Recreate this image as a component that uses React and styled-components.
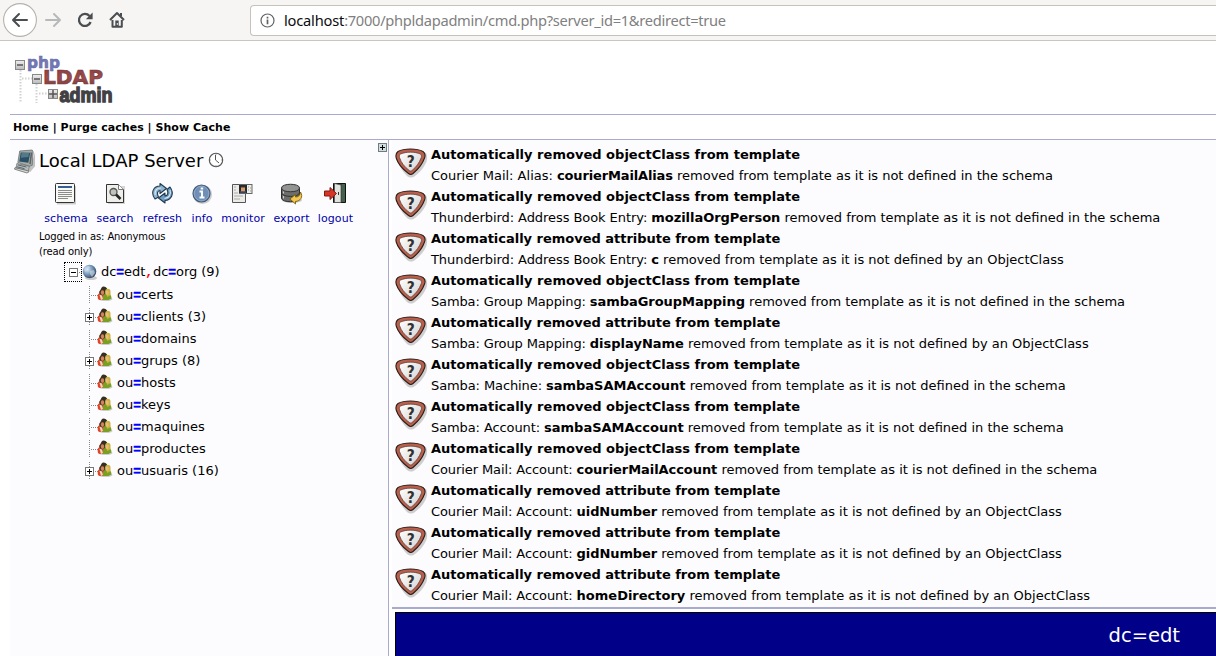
import React from 'react';
import styled, { createGlobalStyle } from 'styled-components';

const Global = createGlobalStyle`
  *{box-sizing:border-box}
  body{margin:0;background:#fff;overflow:hidden;color:#000;font-family:"DejaVu Sans",sans-serif;font-size:13px}
  svg{display:block;flex:none}
`;
const Page = styled.div`width:1216px;height:656px;overflow:hidden;display:flex;flex-direction:column;`;
const Toolbar = styled.div`height:41px;flex:none;background:#f6f5f4;border-bottom:1px solid #c9c6bf;display:flex;align-items:center;overflow:hidden;`;
const NavIcons = styled.div`width:250px;height:40px;flex:none;`;
const UrlField = styled.div`
  height:31px;flex:1;background:#fff;border:1px solid #c6c2b9;border-right:0;border-radius:4px 0 0 4px;
  display:flex;align-items:center;padding-left:9px;gap:9px;
  font:14.67px "Noto Sans",sans-serif;letter-spacing:-.285px;color:#808080;white-space:pre;
`;
const Host = styled.span`color:#0c0c0d;letter-spacing:-.2px;`;
const Header = styled.header`height:73px;flex:none;padding:13px 0 0 14px;`;
const Menu = styled.nav`
  margin-left:10px;height:26px;flex:none;border-top:1px solid #aaaacc;border-bottom:1px solid #aaaacc;
  padding:1px 0 0 3px;font-size:11px;font-weight:bold;line-height:24px;letter-spacing:.03px;white-space:pre;
`;
const Columns = styled.div`display:flex;flex:1;min-height:0;padding-left:10px;`;
const Sidebar = styled.aside`width:379px;flex:none;background:#fcfcfe;border-right:1px solid #aaaacc;`;
const ServerRow = styled.div`display:flex;height:40px;padding-left:3px;`;
const ServerIcon = styled.div`width:26px;padding:9px 0 0 1px;`;
const ServerName = styled.h1`margin:0;font-size:18px;font-weight:normal;line-height:41px;letter-spacing:.03px;white-space:nowrap;`;
const Clock = styled.div`padding:12px 0 0 5px;flex:1;`;
const Expander = styled.div`padding:3px 1px 0 0;`;
const Tools = styled.div`display:flex;padding-left:30px;height:49px;`;
const Tool = styled.div`
  width:${p => p.$w}px;flex:none;display:flex;flex-direction:column;align-items:center;padding-top:2px;
  font-size:11px;line-height:15px;color:#0000aa;gap:5px;letter-spacing:.1px;white-space:nowrap;
`;
const Login = styled.div`padding-left:29px;font-size:10px;line-height:15px;height:31px;letter-spacing:-.12px;`;
const Tree = styled.div`white-space:nowrap;`;
const Root = styled.div`display:flex;align-items:center;height:24px;padding:0 0 1px 54px;letter-spacing:-.06px;`;
const Focus = styled.div`width:18px;height:20px;border:1px dotted #000;padding:5px 0 0 4px;`;
const Globe = styled.div`width:19px;`;
const Branch = styled.div`display:flex;align-items:center;height:22px;padding-left:74px;`;
const BranchArt = styled.div`width:33px;`;
const Op = styled.span`
  font-family:"Liberation Mono",monospace;font-weight:bold;color:${p => p.$c};
  -webkit-text-stroke:${p => p.$heavy ? '.45px' : '0'} ${p => p.$c};
`;
const Content = styled.main`flex:1;min-width:0;padding-left:3px;display:flex;flex-direction:column;`;
const Messages = styled.section`background:#fcfcfe;border-bottom:2px solid #aaaacc;height:469px;flex:none;padding:4px 0 0 3px;`;
const Message = styled.div`display:flex;height:42px;`;
const Shield = styled.div`width:36px;padding-top:4px;`;
const Copy = styled.div`line-height:21px;white-space:nowrap;`;
const Title = styled.div`font-weight:bold;letter-spacing:${p => p.$track}px;`;
const Where = styled.span`letter-spacing:${p => p.$track}px;`;
const Name = styled.b`letter-spacing:${p => p.$track}px;`;
const Entry = styled.h2`
  margin:3px 0 0 3px;flex:1;background:#000088;border-top:1px solid #000;border-left:1px solid #000;
  color:#fff;font-size:19.5px;font-weight:normal;line-height:46px;text-align:right;padding-right:36px;
`;

const Nav = () => (
  <svg width="250" height="40" fill="none" stroke="#4a4e50" strokeWidth="2" strokeLinecap="round" strokeLinejoin="round">
    <circle cx="20" cy="20" r="16.4" fill="#fff" stroke="#b5b2ac" strokeWidth="1.1" />
    <path d="M27 20H13M19 14l-6 6 6 6" />
    <path d="M46 20h14M54 14l6 6-6 6" stroke="#b7b8b8" />
    <path d="M89.5 16A6 6 0 1 0 90.6 22" strokeWidth="2.3" strokeLinecap="butt" />
    <path d="M92.6 12.6v6.6h-6.8z" fill="#4a4e50" stroke="none" />
    <path d="M110 20l7-7 7 7M112.5 20v6.7h9.3V20M121 13v3" strokeLinecap="butt" />
    <path d="M115.3 20.5h3.4v6.5h-3.4z" fill="#4a4e50" stroke="none" />
    <path d="M117.3 23.5v.9" stroke="#fff" strokeWidth="1" />
  </svg>
);
const UrlInfo = () => (
  <svg width="15" height="15" fill="none" stroke="#606365"><circle cx="7.5" cy="7.5" r="6.5" strokeWidth="1.2" /><path d="M7.5 6.6v4.6M7.5 3.8v1.6" strokeWidth="1.7" /></svg>
);
const Logo = () => (
  <svg width="110" height="56">
    <defs>
      <linearGradient id="box" x2="0" y2="1"><stop stopColor="#eee" /><stop offset="1" stopColor="#bbb" /></linearGradient>
      <linearGradient id="red" x2="0" y2="1"><stop stopColor="#843c40" /><stop offset=".5" stopColor="#a14b4c" /><stop offset="1" stopColor="#74383b" /></linearGradient>
    </defs>
    <g stroke="#d2d2d2" strokeWidth="2" strokeDasharray="1.5 1.5"><path d="M6.5 16v33M22.500 30v19M8 24.500h10M25 39.500h10" /></g>
    <g stroke="#888" fill="url(#box)"><rect x="1.500" y="6.500" width="9" height="9" /><rect x="18.500" y="20.500" width="9" height="9" /><rect x="34.500" y="35.500" width="9" height="9" /></g>
    <path d="M3 11h6M20 25h6M35 40h8M39 36v8" stroke="#555" strokeWidth="1.5" />
    <g fontWeight="bold">
      <text x="13" y="14.300" fontFamily="DejaVu Sans" fontSize="16.500" textLength="33" lengthAdjust="spacingAndGlyphs" fill="#7777b5" stroke="#666ca6" strokeWidth=".6">php</text>
      <text x="29" y="30" fontFamily="DejaVu Sans" fontSize="19.500" textLength="60" lengthAdjust="spacingAndGlyphs" fill="url(#red)" stroke="#753a3c" strokeWidth=".7">LDAP</text>
      <text x="45.500" y="47.500" fontFamily="Liberation Sans Narrow, Liberation Sans" fontSize="21" textLength="53" lengthAdjust="spacingAndGlyphs" fill="#414144" stroke="#414144" strokeWidth="1.400">admin</text>
    </g>
  </svg>
);
const Computer = () => (
  <svg width="22" height="25" viewBox="0 0 23 26">
    <path d="M2 19l4-3 12 2 4-15v15l-5 6z" fill="#999" opacity=".6" />
    <path d="M6 2L19 1l1 2-1 14-3 1L4 14z" fill="#a7aba6" stroke="#555e60" strokeWidth=".7" />
    <path d="M7 3.500l10 .3-2 10.600L5.500 13z" fill="#284f66" />
    <path d="M8 4l8 .2-1 4-8 1z" fill="#54798b" />
    <path d="M17.500 3l1.500 1-1.500 12-1.500-.5z" fill="#596466" />
    <path d="M3 15l13 3-1 5-13-3z" fill="#b9beba" stroke="#646b6b" strokeWidth=".7" />
    <path d="M1 19.500l13 3 1.500 1.500-2 1L.5 21z" fill="#d6d9d4" stroke="#555" strokeWidth=".7" />
    <path d="M4 16.500l9 2.300M3 18.500l8 2" stroke="#50616a" />
  </svg>
);
const ClockIcon = () => (
  <svg width="16" height="17" fill="none"><circle cx="8" cy="8" r="6.700" fill="#fff" stroke="#555" strokeWidth="1.100" /><path d="M7.500 3v5l3.500 3" stroke="#555" /><path d="M8 2v1M8 13v1M2 8h1M13 8h1" stroke="#999" /></svg>
);
const Plus = () => (
  <svg width="9" height="9"><rect x=".5" y=".5" width="8" height="8" fill="#cfdfe1" stroke="#707c82" /><path d="M2 4.500h5M4.500 2v5" stroke="#000" /></svg>
);
const ToolIcon = ({ kind }) => (
  <svg width="24" height="24">
    {kind === 'schema' && <><path d="M3 4h19v18.500H3z" fill="#bbb" opacity=".7" /><rect x="1.500" y="1.500" width="19" height="19" rx="1" fill="#f8f8f5" stroke="#333" /><path d="M4 5h14" stroke="#355f93" strokeWidth="2" /><path d="M4 8.500h14M4 10.500h14M4 12.500h14M4 14.500h14M4 16.500h10" stroke="#8c8c89" /></>}
    {kind === 'search' && <><path d="M5 4h17v18H5z" fill="#bbb" opacity=".6" /><path d="M3.500 2.500h12l5 5v13h-17z" fill="#eeeeea" stroke="#333" /><path d="M15.500 2.500v5h5" fill="#fff" stroke="#777" /><circle cx="10.500" cy="10" r="3.500" fill="#bec5ba" stroke="#555" strokeWidth="1.300" /><path d="M13 12.500l4.500 4.500" stroke="#252525" strokeWidth="2.700" /></>}
    {kind === 'refresh' && (
      <g stroke="#1f3a50" strokeWidth="1.100" strokeLinejoin="round">
        <path d="M4 17C-1 10 3 4 9 4V1.500l6.500 5-6.500 5V8.500C6 8.500 6 12 7.500 15z" fill="#8fb4d0" />
        <path d="M19 5c5 7 1 13-5 13.500V21L7.500 16l6.500-5v3c3 0 3.500-3.500 2-6.500z" fill="#6e9cc2" />
        <path d="M4.200 13C3.500 8 6 6 10 6M19 8c1.500 5-1 8-5.500 8.500" fill="none" stroke="#dbe8f1" />
      </g>
    )}
    {kind === 'info' && <><circle cx="12.500" cy="12.500" r="9.500" fill="#aaa" opacity=".6" /><circle cx="11.500" cy="11.500" r="8.500" fill="#6f8fb6" stroke="#44597a" strokeWidth="1.200" /><circle cx="11.500" cy="11.500" r="7.300" fill="none" stroke="#a4b8d2" strokeWidth=".6" /><path d="M9.500 9.500H12v6M9.500 15.500h5M10.700 6.500h2.500" fill="none" stroke="#fff" strokeWidth="1.900" /></>}
    {kind === 'monitor' && (
      <>
        <path d="M1.500 2.500h13v18h-13z" fill="#ebebe8" stroke="#555" />
        <path d="M3 5h2M3 8h2M3 11h4M3 14h9M3 17h6" stroke="#aaa" />
        <rect x="8.500" y="2.500" width="12.500" height="9" fill="#eeeee8" stroke="#666" />
        <path d="M8 3h8v8H8z" fill="#252a30" />
        <path d="M10 9.500V5h4v4.500z" fill="#dc9865" /><path d="M9 10h6" stroke="#3d6690" /><path d="M10 5h4" stroke="#4a3025" />
        <path d="M17 5h1M19 6h1M17 8h1M19 9h1" stroke="#999" />
      </>
    )}
    {kind === 'export' && <><ellipse cx="12" cy="18" rx="10" ry="3" fill="#aaa" opacity=".6" /><path d="M1.500 6v10c0 5 18 5 18 0V6z" fill="#6c6e6c" stroke="#2c2d2c" /><path d="M1.500 11c1 4.500 17 4.500 18 0" fill="none" stroke="#303030" /><path d="M1.500 6c0 5 18 5 18 0S1.500 1 1.500 6z" fill="#929492" stroke="#333" /><path d="M3.500 9.500v2M3.500 14v2.500" stroke="#ccc" /><path d="M20.500 10c3 5 0 9-5 9.500V22l-5.500-5 5.500-4.500V15c3 0 4.500-1.500 5-5z" fill="#f3c84c" stroke="#7b5c11" strokeWidth=".9" /></>}
    {kind === 'logout' && <><path d="M9.500 1.500h12v19h-12z" fill="#252b27" stroke="#111" /><path d="M17.500 2h3.500v18h-3.500z" fill="#45604b" /><path d="M10.500 1.500l6.500 1.500v17.500h-6.500z" fill="#e0e3dd" stroke="#555" strokeWidth=".8" /><path d="M14.500 10v3" stroke="#333" /><path d="M.5 9H6V5.500l6.500 6L6 17.500V14H.5z" fill="#d83426" stroke="#7f1a14" /></>}
  </svg>
);
const Minus = () => <svg width="14" height="9"><rect x=".5" y=".5" width="8" height="8" fill="#fff" stroke="#777" /><path d="M2 4.500h5" stroke="#000" /><path d="M10 4.500h4" stroke="#888" strokeDasharray="1 1" /></svg>;
const GlobeIcon = () => (
  <svg width="16" height="16"><defs><radialGradient id="globe" cx=".35" cy=".35" r=".7"><stop stopColor="#dbe8f3" /><stop offset=".45" stopColor="#83a3c4" /><stop offset="1" stopColor="#304560" /></radialGradient></defs>
    <ellipse cx="9" cy="14" rx="6" ry="2" fill="#999" opacity=".5" /><circle cx="7.500" cy="7.500" r="6.800" fill="url(#globe)" /><path d="M3 3l4-1 1 2-3 1-1 3-2-2zM8 7l4-1 1 3-3 4-2-3z" fill="#d2deea" opacity=".6" /></svg>
);
const PeopleBranch = ({ plus }) => (
  <svg width="31" height="22">
    <path d="M5.500 2v18M7 11.500h7" stroke="#888" strokeDasharray="1 1" />
    {plus && <><rect x="1.500" y="7.500" width="8" height="8" fill="#fff" stroke="#777" /><path d="M3 11.500h5M5.500 9v5" stroke="#000" /></>}
    <g transform="translate(-.5 0)">
      <ellipse cx="22" cy="15" rx="7" ry="2" fill="#888" opacity=".4" />
      <path d="M14.500 15c-1.500-6 2-6.500 5.500-6l2 5-2 2c-3 0-5 0-5.500-1z" fill="#e04326" />
      <path d="M19 16l1-6c4-3 8 0 8 4.500L25 16z" fill="#79a023" />
      <path d="M16 11l2-1 1.500 5-2 1z" fill="#f1d3c0" />
      <path d="M17.500 7c-1-5 4-6 6-2.500l.5 4-4 1z" fill="#342f20" />
      <path d="M15.500 8l2-3 3 1 1 4-3 1.500-2-1z" fill="#49331d" />
      <ellipse cx="19" cy="8.600" rx="1.700" ry="2.300" fill="#ce855f" />
      <path d="M21.500 8c0-4 5-4 5.500-1v4l-3 2z" fill="#cdb340" /><ellipse cx="23.700" cy="8.800" rx="1.600" ry="2.300" fill="#e8bb7a" />
    </g>
  </svg>
);
const ShieldIcon = () => (
  <svg width="34" height="31">
    <defs><linearGradient id="face" x2="1" y2="1"><stop stopColor="#fff" /><stop offset="1" stopColor="#d2d2d2" /></linearGradient></defs>
    <path d="M5 5C12 2 25 2 31 5c4 7-3 17-11 23-3 2-5 2-8 0C5 21 1 13 5 5z" fill="#777" opacity=".35" />
    <path d="M3 3.500C9 .2 22 .2 28 3.500c2 1.500 2.500 4 1.500 6.500-2 6-6 11-11.500 15.500-1.500 1.300-3 1.300-4.500 0C7.500 21 3 16 1.200 10 .5 7 1 5 3 3.500z" fill="#b9604c" stroke="#2f1d19" strokeWidth="1.100" />
    <path d="M5.500 6c6-2.500 14-2.500 20 0 1 1 1.200 2 .8 3.500-2 5.500-5 9.500-9.300 13-1 .7-1.700.7-2.700 0C9.500 19 6 14.500 4.500 9.500c-.3-1.700-.2-2.700 1-3.500z" fill="url(#face)" stroke="#633d35" strokeWidth=".8" />
    <text x="15.800" y="19" textAnchor="middle" fontFamily="DejaVu Sans" fontSize="16" fontWeight="bold" textLength="8" lengthAdjust="spacingAndGlyphs" fill="#303030">?</text>
  </svg>
);

const tools = [['schema', 52], ['search', 46], ['refresh', 49], ['info', 30], ['monitor', 52], ['export', 45], ['logout', 43]];
const units = [['certs'], ['clients (3)', true], ['domains'], ['grups (8)', true], ['hosts'], ['keys'], ['maquines'], ['productes'], ['usuaris (16)', true]];
// Type, template, removed name, then the tracking of the template and of the name.
const messages = [
  ['objectClass', 'Courier Mail: Alias', 'courierMailAlias', 0, -.14],
  ['objectClass', 'Thunderbird: Address Book Entry', 'mozillaOrgPerson', -.07, -.04],
  ['attribute', 'Thunderbird: Address Book Entry', 'c', -.07, 0],
  ['objectClass', 'Samba: Group Mapping', 'sambaGroupMapping', -.13, -.05],
  ['attribute', 'Samba: Group Mapping', 'displayName', -.13, 0],
  ['objectClass', 'Samba: Machine', 'sambaSAMAccount', -.1, 0],
  ['objectClass', 'Samba: Account', 'sambaSAMAccount', -.1, 0],
  ['objectClass', 'Courier Mail: Account', 'courierMailAccount', -.09, -.06],
  ['attribute', 'Courier Mail: Account', 'uidNumber', -.09, -.08],
  ['attribute', 'Courier Mail: Account', 'gidNumber', -.09, -.08],
  ['attribute', 'Courier Mail: Account', 'homeDirectory', -.09, 0],
];

export default function App() {
  return (
    <Page>
      <Global />
      <Toolbar>
        <NavIcons><Nav /></NavIcons>
        <UrlField><UrlInfo /><span><Host>localhost</Host>:7000/phpldapadmin/cmd.php?server_id=1&amp;redirect=true</span></UrlField>
      </Toolbar>
      <Header><Logo /></Header>
      <Menu>Home | Purge caches | Show Cache</Menu>
      <Columns>
        <Sidebar>
          <ServerRow>
            <ServerIcon><Computer /></ServerIcon>
            <ServerName>Local LDAP Server</ServerName>
            <Clock><ClockIcon /></Clock>
            <Expander><Plus /></Expander>
          </ServerRow>
          <Tools>{tools.map(([k, w]) => <Tool key={k} $w={w}><ToolIcon kind={k} /><span>{k}</span></Tool>)}</Tools>
          <Login>Logged in as: Anonymous<br />(read only)</Login>
          <Tree>
            <Root>
              <Focus><Minus /></Focus><Globe><GlobeIcon /></Globe>
              <span>dc<Op $heavy $c="#00f">=</Op>edt<Op $c="#f00">,</Op>dc<Op $heavy $c="#00f">=</Op>org (9)</span>
            </Root>
            {units.map(([name, plus]) => (
              <Branch key={name}><BranchArt><PeopleBranch plus={plus} /></BranchArt><span>ou<Op $heavy $c="#00f">=</Op>{name}</span></Branch>
            ))}
          </Tree>
        </Sidebar>
        <Content>
          <Messages>
            {messages.map(([type, where, name, whereTrack, nameTrack], i) => (
              <Message key={i}>
                <Shield><ShieldIcon /></Shield>
                <Copy>
                  <Title $track={type === 'attribute' ? -.02 : .02}>Automatically removed {type} from template</Title>
                  <div><Where $track={whereTrack}>{where}: </Where><Name $track={nameTrack}>{name}</Name> removed from template as it is not defined {type === 'attribute' ? 'by an ObjectClass' : 'in the schema'}</div>
                </Copy>
              </Message>
            ))}
          </Messages>
          <Entry>dc=edt</Entry>
        </Content>
      </Columns>
    </Page>
  );
}
